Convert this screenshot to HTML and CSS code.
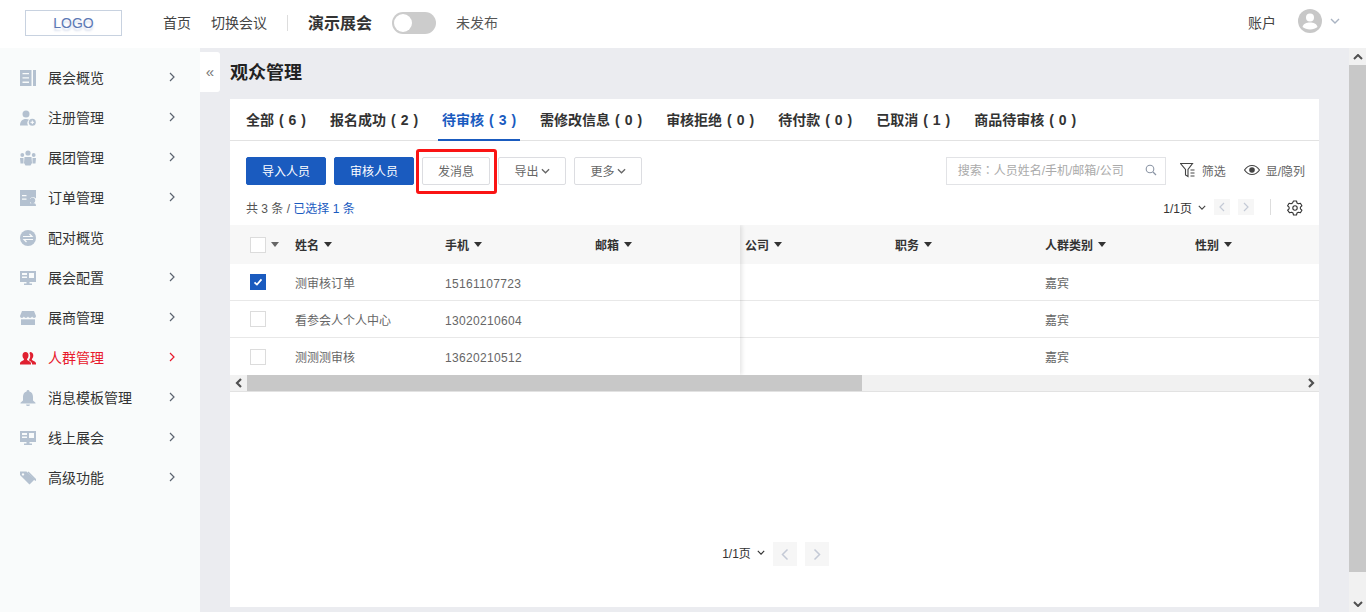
FILE: index.html
```html
<!DOCTYPE html>
<html lang="zh-CN">
<head>
<meta charset="utf-8">
<title>观众管理</title>
<link rel="stylesheet" href="styles.css">
</head>
<body>
<svg class="defs" width="0" height="0">
  <symbol id="monitor" viewBox="0 0 16 16"><path d="M0 1h16v11H9.500v1.600H12V15H4v-1.400h2.500V12H0zM2 3v2h5V3zM9 3v5h5V3zM2 6.500v1.500h5V6.500z" fill-rule="evenodd"/></symbol>
  <symbol id="chev" viewBox="0 0 8 10"><path d="M2 1l4 4-4 4" fill="none" stroke="currentColor" stroke-width="1.200"/></symbol>
  <symbol id="chev-bold" viewBox="0 0 8 10"><path d="M2 1l4 4-4 4" fill="none" stroke="currentColor" stroke-width="2.200"/></symbol>
  <symbol id="down" viewBox="0 0 10 6"><path d="M1 1l4 4 4-4" fill="none" stroke="currentColor" stroke-width="1.400"/></symbol>
</svg>
<header class="topbar">
  <div class="logo">LOGO</div>
  <nav class="topnav"><a>首页</a><a>切换会议</a></nav>
  <span class="vline"></span>
  <strong class="expo">演示展会</strong>
  <span class="toggle"><span class="knob"></span></span>
  <span class="status">未发布</span>
  <span class="account">账户</span>
  <svg class="avatar" viewBox="0 0 24 24"><circle cx="12" cy="12" r="12" fill="#c8c8c8"/><circle cx="12" cy="8.500" r="4" fill="#fff"/><path d="M4.500 18c1-3.500 4-4.500 7.500-4.500s6.500 1 7.500 4.500c-2 1.500-4.500 2.500-7.500 2.500s-5.500-1-7.500-2.500z" fill="#fff"/></svg>
  <svg class="acct-caret"><use href="#down"/></svg>
</header>
<div class="body-row">
  <aside class="sidebar">
    <a class="nav-item"><svg class="nav-icon" viewBox="0 0 16 16"><path d="M0 0h11.500v16H0zM2.500 3v1.300h6.500V3zM2.500 7.300v1.300h6.500V7.300zM2.500 11.600v1.300h6.500v-1.300zM13 0h3v16h-3z" fill-rule="evenodd"/></svg><span class="nav-label">展会概览</span><svg class="chev"><use href="#chev"/></svg></a>
    <a class="nav-item"><svg class="nav-icon" viewBox="0 0 16 16"><circle cx="6" cy="4" r="3.500"/><path d="M0 15.500c0-4 2-6.500 6-6.500 1.200 0 2.200.3 3 .8A4.500 4.500 0 0 0 8 15.500z"/><circle cx="12.300" cy="12.300" r="3.500"/><path d="M12.300 10.500v3.600M10.500 12.300h3.600" stroke="#fff" fill="none"/></svg><span class="nav-label">注册管理</span><svg class="chev"><use href="#chev"/></svg></a>
    <a class="nav-item"><svg class="nav-icon" viewBox="0 0 16 16"><circle cx="8" cy="3" r="2.600"/><path d="M4.500 7h7l.5 6-1.500 2.500h-5L4 13z"/><circle cx="2.300" cy="5" r="1.900"/><path d="M0 8h3.500v5.500H.5z"/><circle cx="13.700" cy="5" r="1.900"/><path d="M12.500 8H16l-.5 5.500h-3z"/></svg><span class="nav-label">展团管理</span><svg class="chev"><use href="#chev"/></svg></a>
    <a class="nav-item"><svg class="nav-icon" viewBox="0 0 16 16"><path d="M0 0h16v8.500a4 4 0 0 0-6 0V16H0zM2 5v1.300h4.500V5zM2 8.500v1.300h4.500V8.500z" fill-rule="evenodd"/><circle cx="12.500" cy="10.500" r="2.700"/><path d="M8 16c0-2 1.500-3 4.500-3s3.500 1 3.500 3z"/></svg><span class="nav-label">订单管理</span><svg class="chev"><use href="#chev"/></svg></a>
    <a class="nav-item"><svg class="nav-icon" viewBox="0 0 16 16"><circle cx="8" cy="8" r="8"/><path d="M3 6.500h9l-2.500-2.500M13 9.500H4l2.500 2.500" fill="none" stroke="#f9fbfb" stroke-width="1.200"/></svg><span class="nav-label">配对概览</span></a>
    <a class="nav-item"><svg class="nav-icon"><use href="#monitor"/></svg><span class="nav-label">展会配置</span><svg class="chev"><use href="#chev"/></svg></a>
    <a class="nav-item"><svg class="nav-icon" viewBox="0 0 16 16"><path d="M2 1h12l2 5c0 1.200-.8 2-1.900 2-1 0-1.700-.6-2-1.400-.3.800-1.100 1.400-2.050 1.400S8.300 7.400 8 6.600C7.700 7.400 6.900 8 5.950 8S4.200 7.400 3.900 6.600C3.600 7.400 2.900 8 1.900 8 .8 8 0 7.200 0 6z"/><path d="M1 9.300h14V15H1z"/></svg><span class="nav-label">展商管理</span><svg class="chev"><use href="#chev"/></svg></a>
    <a class="nav-item active"><svg class="nav-icon" viewBox="0 0 16 16"><path d="M5.500 2c2 0 3 1.500 3 3.500 0 1.500-.6 2.700-1.400 3.500v1c1 .7 3.900 1.500 3.900 3.500v1H0v-1c0-2 2.900-2.800 3.900-3.500V9C3.100 8.200 2.500 7 2.500 5.500 2.500 3.500 3.500 2 5.500 2z"/><path d="M10 2c2 0 3.300 1.500 3.300 3.500 0 1.500-.6 2.700-1.400 3.500v1c1 .7 4.100 1.500 4.100 3.500v1h-3.800c0-2.300-1.800-3.300-3.400-4.300.9-1 1.400-2.500 1.400-4.200 0-1-.2-2-.7-2.700z"/></svg><span class="nav-label">人群管理</span><svg class="chev"><use href="#chev"/></svg></a>
    <a class="nav-item"><svg class="nav-icon" viewBox="0 0 16 16"><path d="M8 0a1.400 1.400 0 0 1 1.400 1.500C12 2.200 13 4.500 13 7v3.500l2.500 2.200v.8H.5v-.8L3 10.500V7c0-2.500 1-4.800 3.600-5.500A1.400 1.400 0 0 1 8 0z"/><path d="M6 14.500h4a2 1.500 0 0 1-4 0z"/></svg><span class="nav-label">消息模板管理</span><svg class="chev"><use href="#chev"/></svg></a>
    <a class="nav-item"><svg class="nav-icon"><use href="#monitor"/></svg><span class="nav-label">线上展会</span><svg class="chev"><use href="#chev"/></svg></a>
    <a class="nav-item"><svg class="nav-icon" viewBox="0 0 16 16"><path d="M0 1.500h6.500l8 8-5 5-9.500-9.500zM3 3.200a1.200 1.200 0 1 0 .01 0z" fill-rule="evenodd"/><path d="M8.500 1.500l7.500 7.500v1.500L15.300 11 7.500 2.500z"/></svg><span class="nav-label">高级功能</span><svg class="chev"><use href="#chev"/></svg></a>
  </aside>
  <main class="main">
    <button class="collapse" type="button">«</button>
    <h1 class="page-title">观众管理</h1>
    <section class="card">
      <div class="tabs">
        <a class="tab">全部 ( 6 )</a>
        <a class="tab">报名成功 ( 2 )</a>
        <a class="tab current">待审核 ( 3 )</a>
        <a class="tab">需修改信息 ( 0 )</a>
        <a class="tab">审核拒绝 ( 0 )</a>
        <a class="tab">待付款 ( 0 )</a>
        <a class="tab">已取消 ( 1 )</a>
        <a class="tab">商品待审核 ( 0 )</a>
      </div>
      <div class="toolbar">
        <a class="btn primary">导入人员</a>
        <a class="btn primary">审核人员</a>
        <a class="btn highlighted">发消息<span class="redbox"></span></a>
        <a class="btn">导出<svg class="btn-caret"><use href="#down"/></svg></a>
        <a class="btn">更多<svg class="btn-caret"><use href="#down"/></svg></a>
        <div class="search"><span class="placeholder">搜索<span class="colon" lang="zh-TW">：</span>人员姓名/手机/邮箱/公司</span>
          <svg class="search-icon" viewBox="0 0 12 12"><circle cx="5" cy="5" r="3.800" fill="none" stroke="#8b95a5" stroke-width="1.100"/><path d="M8 8l3 3" stroke="#8b95a5" stroke-width="1.200"/></svg></div>
        <a class="tool filter"><svg class="tool-icon" viewBox="0 0 16 16"><path d="M.5 1.500h12L8 7.500v7L5.500 13V7.500z" fill="none" stroke="#444" stroke-width="1.100"/><path d="M10.500 8h4M10.500 11h4M10.500 14h4" stroke="#444"/></svg>筛选</a>
        <a class="tool eye"><svg class="tool-icon" viewBox="0 0 16 16"><path d="M.5 8C2.500 5 5 3.500 8 3.500S13.500 5 15.500 8C13.500 11 11 12.500 8 12.500S2.500 11 .5 8z" fill="none" stroke="#444" stroke-width="1.100"/><circle cx="8" cy="8" r="2.800" fill="#444"/></svg>显/隐列</a>
      </div>
      <div class="summary">
        <span class="count">共 3 条 / <span class="selected">已选择 1 条</span></span>
        <div class="pager-small">
          <span class="pager-text">1/1页</span><svg class="pager-caret"><use href="#down"/></svg>
          <span class="pg-btn small"><svg class="pg-chev flip"><use href="#chev"/></svg></span>
          <span class="pg-btn small"><svg class="pg-chev"><use href="#chev"/></svg></span>
          <span class="pg-divider"></span>
          <svg class="gear" viewBox="0 0 16 16"><path d="M6.500 1h3l.5 2 1.400.8 2-.6 1.500 2.600-1.500 1.400v1.600l1.500 1.400-1.500 2.600-2-.6-1.400.8-.5 2h-3l-.5-2-1.400-.8-2 .6L.6 10.200l1.500-1.400V7.200L.6 5.800l1.500-2.600 2 .6L5.500 3z" fill="none" stroke="#333" stroke-width="1.100" stroke-linejoin="round"/><circle cx="8" cy="8" r="2.200" fill="none" stroke="#333" stroke-width="1.100"/></svg>
        </div>
      </div>
      <div class="table">
        <div class="frozen"></div>
        <div class="row head">
          <div class="cell check"><span class="box"></span><i class="tri grey"></i></div>
          <div class="cell">姓名<i class="tri"></i></div>
          <div class="cell">手机<i class="tri"></i></div>
          <div class="cell">邮箱<i class="tri"></i></div>
          <div class="cell">公司<i class="tri"></i></div>
          <div class="cell">职务<i class="tri"></i></div>
          <div class="cell">人群类别<i class="tri"></i></div>
          <div class="cell">性别<i class="tri"></i></div>
        </div>
        <div class="row">
          <div class="cell check"><span class="box checked"><svg class="tick" viewBox="0 0 16 16"><path d="M4 8.500l2.800 2.500L12 5" fill="none" stroke="#fff" stroke-width="2"/></svg></span></div>
          <div class="cell">测审核订单</div><div class="cell phone">15161107723</div><div class="cell"></div><div class="cell"></div><div class="cell"></div><div class="cell">嘉宾</div><div class="cell"></div>
        </div>
        <div class="row">
          <div class="cell check"><span class="box"></span></div>
          <div class="cell">看参会人个人中心</div><div class="cell phone">13020210604</div><div class="cell"></div><div class="cell"></div><div class="cell"></div><div class="cell">嘉宾</div><div class="cell"></div>
        </div>
        <div class="row">
          <div class="cell check"><span class="box"></span></div>
          <div class="cell">测测测审核</div><div class="cell phone">13620210512</div><div class="cell"></div><div class="cell"></div><div class="cell"></div><div class="cell">嘉宾</div><div class="cell"></div>
        </div>
      </div>
      <div class="hscroll">
        <span class="harrow"><svg class="harrow-icon flip"><use href="#chev-bold"/></svg></span>
        <span class="hthumb"></span>
        <span class="hspace"></span>
        <span class="harrow"><svg class="harrow-icon"><use href="#chev-bold"/></svg></span>
      </div>
      <div class="pager-bottom">
        <span class="pager-text">1/1页</span><svg class="pager-caret dark"><use href="#down"/></svg>
        <span class="pg-btn large"><svg class="pg-chev big flip"><use href="#chev"/></svg></span>
        <span class="pg-btn large"><svg class="pg-chev big"><use href="#chev"/></svg></span>
      </div>
    </section>
  </main>
  <div class="vscroll">
    <span class="varrow"><svg class="varrow-icon" viewBox="0 0 10 6"><path d="M1 5l4-4 4 4" fill="none" stroke="#505050" stroke-width="2"/></svg></span>
    <span class="vthumb"></span>
    <span class="varrow"><svg class="varrow-icon" viewBox="0 0 10 6"><path d="M1 1l4 4 4-4" fill="none" stroke="#505050" stroke-width="2"/></svg></span>
  </div>
</div>
</body>
</html>
```

FILE: styles.css
```css
* { box-sizing: border-box; }
html, body { margin: 0; height: 612px; overflow: hidden; }
body {
  font-family: "Liberation Sans", "Noto Sans CJK SC", sans-serif;
  font-size: 12px;
  color: #333;
  background: #fff;
  display: flex;
  flex-direction: column;
}
.defs { position: absolute; }
a { color: inherit; text-decoration: none; }

/* top bar */
.topbar { height: 48px; flex: none; display: flex; align-items: center; background: #fff; padding: 0 0 2px 25px; }
.logo {
  width: 97px; height: 26px; border: 1px solid #c8d2e0;
  display: flex; align-items: center; justify-content: center;
  font-size: 14px; color: #5b78b5; text-shadow: 0 3px 2px rgba(91,120,181,.25);
}
.topnav { display: flex; gap: 20px; margin-left: 41px; font-size: 14px; color: #444; padding-bottom: 2px; }
.vline { width: 1px; height: 16px; background: #ddd; margin-left: 20px; }
.expo { font-size: 16px; margin-left: 20px; color: #333; padding-bottom: 2px; }
.toggle { width: 44px; height: 22px; border-radius: 11px; background: #ccc; margin-left: 20px; padding: 2px; display: flex; }
.knob { width: 18px; height: 18px; border-radius: 50%; background: #fff; }
.status { font-size: 14px; color: #555; margin-left: 20px; padding-bottom: 2px; }
.account { font-size: 14px; color: #444; margin-left: auto; padding-bottom: 3px; }
.avatar { width: 24px; height: 24px; margin-left: 22px; margin-bottom: 4px; }
.acct-caret { width: 10px; height: 6px; margin: 0 26px 4px 8px; color: #a9b3c2; }

.body-row { flex: 1; display: flex; min-height: 0; }

/* sidebar */
.sidebar { width: 200px; flex: none; background: #f9fbfb; padding-top: 10px; }
.nav-item { height: 40px; display: flex; align-items: center; padding-left: 20px; font-size: 14px; color: #333; }
.nav-icon { width: 16px; height: 16px; fill: #b4c1d0; flex: none; }
.nav-label { margin-left: 12px; width: 120px; padding-bottom: 2px; }
.chev { width: 8px; height: 10px; color: #5c6470; margin-bottom: 3px; }
.active { color: #e8192c; }
.active .nav-icon { fill: #e02030; }
.active .chev { color: #e8192c; }

/* main */
.main { flex: 1; background: #ebecf0; padding: 0 30px 5px; display: flex; flex-direction: column; position: relative; min-width: 0; }
.collapse {
  position: absolute; left: 0; top: 4px; width: 20px; height: 40px;
  border: 0; padding: 0 0 1px; background: #fff; border-radius: 0 3px 3px 0;
  color: #777; font-size: 15px; font-family: "Liberation Sans", sans-serif;
}
.page-title { margin: 0; height: 51px; line-height: 50px; font-size: 18px; font-weight: 700; color: #222; }
.card { flex: 1; background: #fff; display: flex; flex-direction: column; min-height: 0; }

/* tabs */
.tabs { height: 42px; flex: none; display: flex; gap: 16px; padding-left: 12px; border-bottom: 1px solid #e2e2e2; }
.tab { padding: 0 4px; height: 42px; line-height: 43px; font-size: 14px; font-weight: 700; color: #333; word-spacing: 1.08px; white-space: nowrap; }
.current { color: #1a5bbf; border-bottom: 2px solid #1a5bbf; }

/* toolbar */
.toolbar { display: flex; align-items: center; gap: 8px; padding: 16px 14px 0 16px; height: 44px; flex: none; }
.btn {
  width: 68px; height: 28px; display: flex; align-items: center; justify-content: center;
  border: 1px solid #dcdde1; border-radius: 2px; font-size: 12px; color: #666; background: #fff; padding-bottom: 2px;
}
.primary { width: 80px; background: #1a5bbf; border-color: #1a5bbf; color: #fff; }
.highlighted { position: relative; }
.redbox { position: absolute; left: -7px; top: -9px; width: 81px; height: 45px; border: 3px solid #fa1414; border-radius: 3px; }
.btn-caret { width: 9px; height: 6px; margin-left: 2px; margin-top: 2px; color: #666; }
.search {
  width: 220px; height: 28px; margin-left: auto; border: 1px solid #e2e3e6;
  display: flex; align-items: center; justify-content: space-between; padding: 0 8px 0 11px;
}
.placeholder { color: #aaa; font-size: 12px; padding-bottom: 3px; }
.colon { font-family: "Noto Sans CJK TC", sans-serif; }
.search-icon { width: 12px; height: 12px; margin-bottom: 2px; }
.tool { display: flex; align-items: center; font-size: 12px; color: #666; padding-bottom: 2px; }
.tool-icon { width: 16px; height: 16px; margin-right: 6px; }
.filter { margin-left: 6px; }
.eye { margin-left: 10px; }

/* summary */
.summary { height: 40px; flex: none; display: flex; align-items: center; justify-content: space-between; padding: 4px 14px 0 16px; }
.count { color: #555; }
.selected { color: #1a5bbf; }
.pager-small, .pager-bottom { display: flex; align-items: center; }
.pager-text { color: #333; font-size: 12px; }
.pager-caret { width: 8px; height: 5px; margin-left: 6px; color: #444; }
.pg-btn { display: flex; align-items: center; justify-content: center; background: #f6f6f6; color: #c4cad6; }
.small { width: 16px; height: 16px; margin-left: 8px; }
.small:first-of-type { margin-left: 9px; }
.pg-chev { width: 8px; height: 10px; }
.big { width: 10px; height: 13px; }
.flip { transform: scaleX(-1); }
.pg-divider { width: 1px; height: 16px; background: #ddd; margin-left: 16px; }
.gear { width: 16px; height: 16px; margin: 1px 2px 0 16px; }

/* table */
.table { position: relative; flex: none; overflow: hidden; }
.frozen { position: absolute; left: 0; top: 0; bottom: 0; width: 510px; box-shadow: 2px 0 4px rgba(0,0,0,.1); pointer-events: none; }
.row { display: grid; grid-template-columns: 65px repeat(6, 150px) 124px; height: 37px; border-bottom: 1px solid #e8e8e8; }
.cell { display: flex; align-items: center; font-size: 12px; color: #666; white-space: nowrap; }
.phone { letter-spacing: .33px; padding-top: 3px; }
.row:last-child { border-bottom: 0; }
.head { height: 39px; background: #f7f7f7; border-bottom: 0; }
.head .cell { font-weight: 700; color: #333; }
.check { padding-left: 20px; }
.box { width: 16px; height: 16px; border: 1px solid #dcdcdc; background: #fff; display: block; }
.checked { background: #1a5bbf; border-color: #1a5bbf; display: flex; align-items: center; justify-content: center; }
.tick { width: 14px; height: 14px; }
.tri { width: 0; height: 0; border: 4px solid transparent; border-top: 5px solid #333; border-bottom: 0; margin-left: 5px; margin-bottom: 1px; }
.tri.grey { border-top-color: #666; margin-left: 5px; }

/* horizontal scroller */
.hscroll { height: 17px; flex: none; display: flex; background: #f1f1f1; border-bottom: 1px solid #e2e2e2; }
.harrow { width: 17px; flex: none; display: flex; align-items: center; justify-content: center; }
.harrow-icon { width: 8px; height: 10px; color: #505050; }
.hthumb { width: 615px; background: #c8c8c8; }
.hspace { flex: 1; }

/* bottom pager */
.pager-bottom { flex: 1; justify-content: center; padding: 150px 0 0 2px; align-items: flex-start; }
.pager-bottom .pager-text { margin-top: 2px; }
.pager-bottom .pager-caret { margin-top: 8px; color: #333; }
.large { width: 24px; height: 24px; margin-left: 8px; }
.large:first-of-type { margin-left: 9px; }

/* page scrollbar */
.vscroll { width: 17px; flex: none; background: #f1f1f1; display: flex; flex-direction: column; }
.varrow { height: 17px; flex: none; display: flex; align-items: center; justify-content: center; }
.varrow-icon { width: 10px; height: 6px; }
.vthumb { flex: 1; background: #c8c8c8; margin-bottom: 23px; }
```
